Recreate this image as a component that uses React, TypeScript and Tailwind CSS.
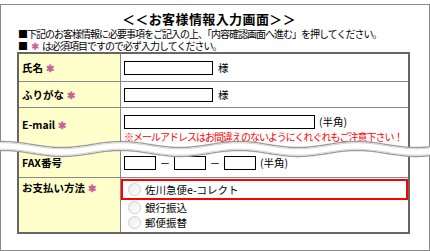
import React from "react";

function Req() {
  return <span className="text-[#c8609a] ml-[3px] text-[10px]">✱</span>;
}

function Box({ w }: { w: string }) {
  return <span className={`inline-block h-[14px] border border-black bg-white ${w}`} />;
}

function Radio() {
  return (
    <span className="inline-block w-[13px] h-[13px] rounded-full border border-[#cfcfcf] bg-gradient-to-br from-[#ececec] to-white mr-[4px] shrink-0" />
  );
}

function Wave() {
  // tear band across the form
  const top: string[] = [];
  const bot: string[] = [];
  for (let x = -2; x <= 432; x += 2) {
    const c = 17 + 3 * Math.cos((2 * Math.PI * (x - 62)) / 118);
    top.push(`${x},${(c - 4.5).toFixed(2)}`);
    bot.push(`${x},${(c + 4.5).toFixed(2)}`);
  }
  const shift = (pts: string[], d: number) =>
    pts.map((p) => {
      const [a, b] = p.split(",");
      return `${a},${(+b + d).toFixed(2)}`;
    });
  const fill = `M${top.join(" L")} L${[...bot].reverse().join(" L")} Z`;
  return (
    <svg className="absolute left-0 top-[132px]" width="430" height="32">
      <path d={fill} fill="white" />
      <path d={`M${top.join(" L")}`} fill="none" stroke="#9a9a9a" strokeWidth="1.3" />
      <path d={`M${bot.join(" L")}`} fill="none" stroke="#9a9a9a" strokeWidth="1.3" />
      <path d={`M${shift(top, 1.3).join(" L")}`} fill="none" stroke="#d6d6d6" strokeWidth="1" />
      <path d={`M${shift(bot, -1.3).join(" L")}`} fill="none" stroke="#d6d6d6" strokeWidth="1" />
    </svg>
  );
}

export default function App() {
  return (
    <div className="relative w-[430px] h-[251px] bg-white overflow-hidden text-black font-['Noto_Sans_CJK_JP',sans-serif]">
      <div className="mt-[4px] h-[247px] border border-[#8a8a8a] pt-[6px]">
        <h1 className="text-center text-[13px] font-bold leading-[16px] tracking-[0.4px] pr-[12px]">＜＜お客様情報入力画面＞＞</h1>
        <div className="mt-[1px] pl-[17px] text-[10px] leading-[12px] tracking-[-1px]">
          <p>■下記のお客様情報に必要事項をご記入の上、「内容確認画面へ進む」を押してください。</p>
          <p>
            ■<span className="text-[#c8609a] mx-[4px]">✱</span>は必須項目ですので必ず入力してください。
          </p>
        </div>

        <div className="ml-[16px] w-[393px] border-2 border-[#666] text-[10.5px]">
          <div className="flex h-[28px] border-b border-[#888]">
            <div className="w-[102px] bg-[#ffffcc] border-r border-[#888] pl-[3px] flex items-center font-bold">
              氏名<Req />
            </div>
            <div className="flex-1 pl-[3px] flex items-center gap-[5px]">
              <Box w="w-[89px]" />
              <span>様</span>
            </div>
          </div>

          <div className="flex h-[26px] border-b border-[#888]">
            <div className="w-[102px] bg-[#ffffcc] border-r border-[#888] pl-[3px] flex items-center font-bold">
              ふりがな<Req />
            </div>
            <div className="flex-1 pl-[3px] flex items-center gap-[5px]">
              <Box w="w-[89px]" />
              <span>様</span>
            </div>
          </div>

          <div className="flex h-[41px] border-b border-[#888]">
            <div className="w-[102px] bg-[#ffffcc] border-r border-[#888] pl-[3px] pt-[9px] font-bold">
              E-mail<Req />
            </div>
            <div className="flex-1 pl-[3px] pt-[6px]">
              <div className="flex items-center gap-[4px]">
                <Box w="w-[191px]" />
                <span>(半角)</span>
              </div>
              <p className="text-[#ff0000] text-[10px] leading-[11px] tracking-[-1px] mt-[1px]">※メールアドレスはお間違えのないようにくれぐれもご注意下さい！</p>
            </div>
          </div>

          <div className="flex h-[29px] border-b border-[#888]">
            <div className="w-[102px] bg-[#ffffcc] border-r border-[#888] pl-[3px] flex items-center font-bold">
              FAX番号
            </div>
            <div className="flex-1 pl-[3px] flex items-center">
              <Box w="w-[32px]" />
              <span className="w-[18px] text-center">－</span>
              <Box w="w-[32px]" />
              <span className="w-[18px] text-center">－</span>
              <Box w="w-[32px]" />
              <span className="ml-[4px]">(半角)</span>
            </div>
          </div>

          <div className="flex h-[54px]">
            <div className="w-[102px] bg-[#ffffcc] border-r border-[#888] pl-[3px] pt-[2px] font-bold">
              お支払い方法<Req />
            </div>
            <div className="flex-1 flex flex-col">
              <div className="mt-[1px] h-[21px] border-2 border-[#ff0000] pl-[5px] flex items-center">
                <Radio />
                <span>佐川急便e-コレクト</span>
              </div>
              <div className="h-[15px] pl-[7px] flex items-center">
                <Radio />
                <span>銀行振込</span>
              </div>
              <div className="h-[15px] pl-[7px] flex items-center">
                <Radio />
                <span>郵便振替</span>
              </div>
            </div>
          </div>
        </div>
      </div>
      <Wave />
    </div>
  );
}
